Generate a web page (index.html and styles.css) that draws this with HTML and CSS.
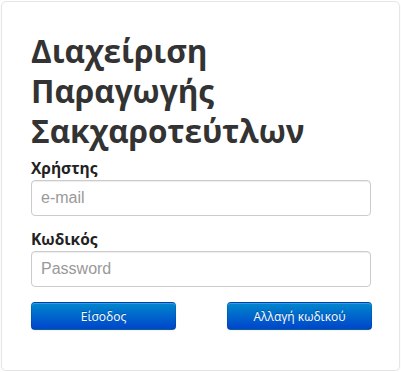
FILE: index.html
```html
<!DOCTYPE html>
<html lang="el">
<head>
<meta charset="utf-8">
<link rel="stylesheet" href="styles.css">
</head>
<body>
<form class="card">
  <h2 class="heading">Διαχείριση Παραγωγής Σακχαροτεύτλων</h2>
  <label class="label" for="user">Χρήστης</label>
  <input class="field" id="user" type="text" placeholder="e-mail">
  <label class="label" for="pass">Κωδικός</label>
  <input class="field" id="pass" type="password" placeholder="Password">
  <div class="actions">
    <button type="button" class="btn">Είσοδος</button>
    <button type="button" class="btn">Αλλαγή κωδικού</button>
  </div>
</form>
</body>
</html>
```

FILE: styles.css
```css
html, body {
  margin: 0;
  padding: 0;
  background: #fff;
}
body {
  padding: 1px 0 0 1px;
  font-family: "Open Sans", "Liberation Sans", sans-serif;
  color: #333;
}
.card {
  box-sizing: border-box;
  width: 399px;
  height: 370px;
  padding: 19px 28px 0 29px;
  border: 1px solid #e5e5e5;
  border-radius: 5px;
  box-shadow: 0 1px 2px rgba(0,0,0,0.05);
  display: flex;
  flex-direction: column;
}
.heading {
  margin: 10px 0 4px;
  font-size: 31.5px;
  line-height: 40px;
  font-weight: 700;
  color: #333;
  width: 300px;
}
.label {
  display: block;
  font-family: "Open Sans", "Liberation Sans", sans-serif;
  font-size: 15.5px;
  line-height: 20px;
  padding-top: 3px;
  font-weight: 700;
  color: #222;
  margin-bottom: 2px;
}
.field {
  box-sizing: border-box;
  width: 340px;
  height: 36px;
  padding: 7px 9px;
  margin: 0 0 10px;
  font-family: "Liberation Sans", Arial, sans-serif;
  font-size: 16px;
  line-height: 20px;
  color: #555;
  border: 1px solid #ccc;
  border-radius: 4px;
  box-shadow: inset 0 1px 1px rgba(0,0,0,0.075);
  outline: none;
}
.field::placeholder {
  color: #999;
}
.actions {
  display: flex;
  justify-content: space-between;
  width: 341px;
  margin-top: 5px;
}
.btn {
  box-sizing: border-box;
  width: 145px;
  height: 28px;
  padding: 0;
  font-family: "Open Sans", "Liberation Sans", sans-serif;
  font-size: 12px;
  color: #fff;
  background: linear-gradient(to bottom, #0088cc, #0044cc);
  border: 1px solid rgba(0,0,0,0.1);
  border-bottom-color: rgba(0,0,0,0.25);
  border-radius: 4px;
  box-shadow: inset 0 1px 0 rgba(255,255,255,0.2), 0 1px 2px rgba(0,0,0,0.05);
  text-shadow: 0 -1px 0 rgba(0,0,0,0.25);
}
```
